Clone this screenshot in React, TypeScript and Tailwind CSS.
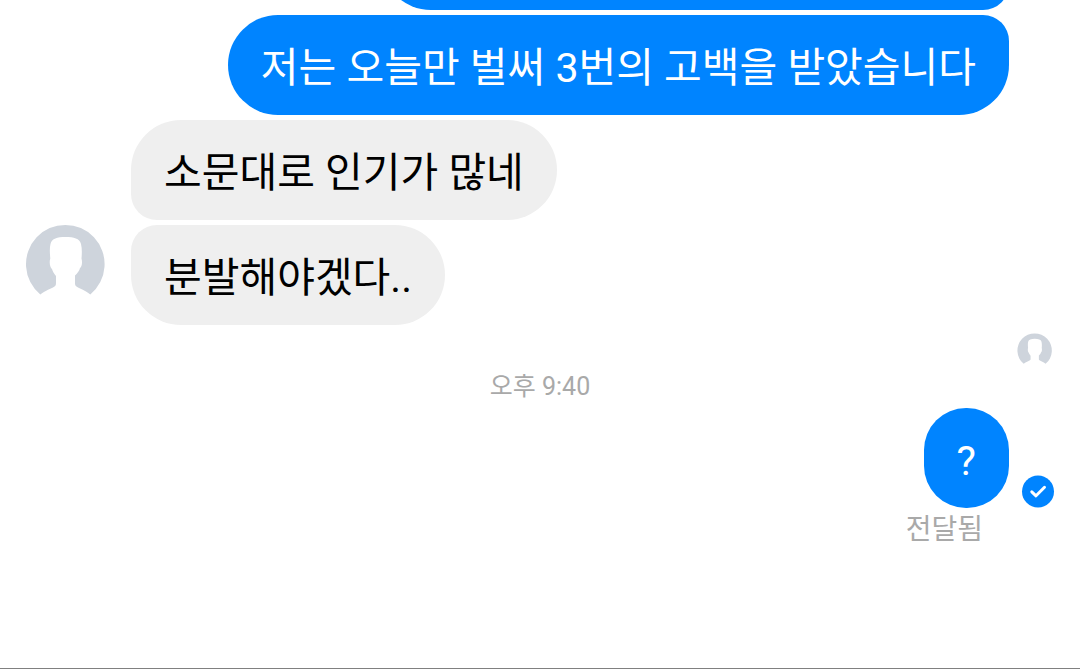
import type { ReactNode } from "react";

function Avatar({ className }: { className: string }) {
  return (
    <svg viewBox="0 0 80 80" className={className} role="img" aria-label="프로필">
      <path
        fill="#ced4dc"
        d="M15.300 70.500A39.300 39.300 0 1 1 65.300 70.500C60 66 55.500 65.300 51.500 62.500C50 61.500 50 60 50 58V51.500C52.500 49 54.500 46.500 55 44C57 43 57.500 38 56.500 34.500C57 29 57 24 56 20C54.500 14.500 49 13 40.500 13S27 14.500 25.500 20C24.500 24 24.800 29 25.300 34.500C24 38 25 43.500 27 45C27.500 47.500 29.500 50 31 52V58C31 60 31 61.500 29.500 62.500C25.500 65.300 21 66 15.300 70.500Z"
      />
    </svg>
  );
}

function Bubble({ className, children }: { className: string; children: ReactNode }) {
  return (
    <p className={`flex h-[100px] items-center whitespace-nowrap px-[33px] pt-1.5 text-[41px] leading-[60px] ${className}`}>
      {children}
    </p>
  );
}

export default function App() {
  return (
    <main className="flex min-h-screen flex-col overflow-x-hidden border-b border-[#808080] bg-white font-[Roboto,'Noto_Sans_CJK_KR',sans-serif]">
      <section className="flex flex-col items-end gap-[5px] pr-[71px]">
        <div className="flex h-[10px] w-full items-end justify-end overflow-hidden">
          <div className="h-[100px] w-[628px] shrink-0 rounded-l-[50px] rounded-r-[26px] bg-[#0084ff]" />
        </div>
        <Bubble className="rounded-l-[50px] rounded-br-[50px] rounded-tr-[26px] bg-[#0084ff] text-white">
          저는 오늘만 벌써 3번의 고백을 받았습니다
        </Bubble>
      </section>

      <section className="mt-[5px] flex items-end pl-[25px]">
        <Avatar className="mb-[21px] size-20" />
        <div className="ml-[26px] flex flex-col items-start gap-[5px]">
          <Bubble className="rounded-r-[50px] rounded-bl-[26px] rounded-tl-[50px] bg-[#efefef] text-black">
            소문대로 인기가 많네
          </Bubble>
          <Bubble className="rounded-r-[50px] rounded-bl-[50px] rounded-tl-[26px] bg-[#efefef] text-black">
            분발해야겠다..
          </Bubble>
        </div>
      </section>

      <div className="mt-2 flex h-9 justify-end pr-7">
        <Avatar className="size-[35px]" />
      </div>

      <time className="text-center text-[25px] leading-9 text-[#a9a9a9]">오후 9:40</time>

      <section className="mt-[3px] flex flex-col items-end">
        <div className="flex items-end gap-3 pr-[25px]">
          <Bubble className="rounded-[42px] bg-[#0084ff] text-white">?</Bubble>
          <svg viewBox="0 0 34 34" className="size-[34px]" role="img" aria-label="전달됨">
            <circle cx="17" cy="17.500" r="16" fill="#0084ff" />
            <path
              d="M10.800 17.800l4.200 4 8.500-8.500"
              fill="none"
              stroke="#fff"
              strokeWidth="3"
              strokeLinecap="round"
              strokeLinejoin="round"
            />
          </svg>
        </div>
        <p className="pr-[97px] text-[28px] leading-[44px] text-[#a9a9a9]">전달됨</p>
      </section>
    </main>
  );
}
